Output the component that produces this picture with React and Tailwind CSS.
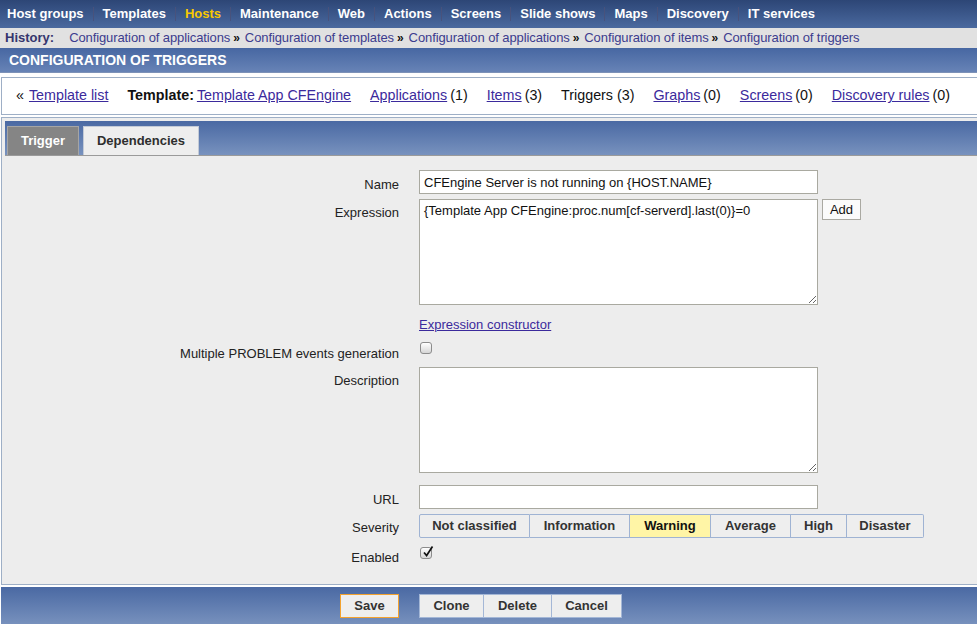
const navItems = [
  "Host groups",
  "Templates",
  "Hosts",
  "Maintenance",
  "Web",
  "Actions",
  "Screens",
  "Slide shows",
  "Maps",
  "Discovery",
  "IT services",
];

const history = [
  "Configuration of applications",
  "Configuration of templates",
  "Configuration of applications",
  "Configuration of items",
  "Configuration of triggers",
];

const severities = [
  { label: "Not classified", w: "w-[111px]" },
  { label: "Information", w: "w-[100px]" },
  { label: "Warning", w: "w-[81px]", active: true },
  { label: "Average", w: "w-[80px]" },
  { label: "High", w: "w-[56px]" },
  { label: "Disaster", w: "w-[77px]" },
];

function Checkbox({ checked }) {
  return (
    <div className="relative w-[12px] h-[12px] rounded-[3px] border border-[#8c8c8c] bg-gradient-to-b from-white to-[#d6d6d6]">
      {checked && (
        <svg className="absolute left-[1px] top-[-3px]" width="12" height="13" viewBox="0 0 12 13">
          <path d="M2 7.5 L4.6 10.5 L10.5 1.5" fill="none" stroke="#111" strokeWidth="1.7" />
        </svg>
      )}
    </div>
  );
}

function Row({ label, pt = "pt-[7px]", className = "", children }) {
  return (
    <div className={"grid grid-cols-[397px_1fr] gap-x-[20px] " + className}>
      <div className={"text-right text-[13px] leading-[16px] text-[#222] " + pt}>{label}</div>
      <div className="flex items-start">{children}</div>
    </div>
  );
}

export default function App() {
  return (
    <div className="w-full h-[624px] overflow-hidden bg-white font-['Liberation_Sans',Arial,sans-serif]">
      {/* top menu */}
      <div className="h-[28px] flex items-center pl-[7px] bg-gradient-to-b from-[#2d4676] to-[#4a699f]">
        {navItems.map((item, i) => (
          <div key={item} className="flex items-center">
            <span className={"text-[13px] font-bold " + (item === "Hosts" ? "text-[#f7c800]" : "text-white")}>
              {item}
            </span>
            {i < navItems.length - 1 && <span className="mx-[9px] w-px h-[14px] bg-[#48527c]" />}
          </div>
        ))}
      </div>

      {/* history */}
      <div className="h-[20px] flex items-center pl-[5px] bg-[#e1e1e1] text-[13px]">
        <span className="font-bold text-[#35356e]">History:</span>
        <div className="ml-[15px] flex items-center tracking-[-0.1px]">
          {history.map((h, i) => (
            <span key={i} className="flex items-center">
              <span className="text-[#3c3c8e]">{h}</span>
              {i < history.length - 1 && <span className="ml-[3px] mr-[5px] text-[12px] font-bold text-[#111]">»</span>}
            </span>
          ))}
        </div>
      </div>

      {/* page header */}
      <div className="h-[25px] flex items-center pl-[9px] bg-gradient-to-b from-[#4767a2] to-[#6783b6] border-b border-[#7d92b8]">
        <span className="text-[14px] font-bold text-white">CONFIGURATION OF TRIGGERS</span>
      </div>

      {/* template navigation */}
      <div className="mt-[4px] ml-[1px] h-[38px] flex items-center pl-[14px] border-l border-y border-[#9eafc6] bg-white text-[14.3px] text-[#111]">
        <span>«</span>
        <a className="ml-[5px] underline text-[#3b2a9c]">Template list</a>
        <span className="ml-[19px] font-bold">Template:</span>
        <a className="ml-[3px] underline text-[#3b2a9c]">Template App CFEngine</a>
        <a className="ml-[19px] underline text-[#3b2a9c]">Applications</a>
        <span className="ml-[3px]">(1)</span>
        <a className="ml-[19px] underline text-[#3b2a9c]">Items</a>
        <span className="ml-[3px]">(3)</span>
        <span className="ml-[19px]">Triggers (3)</span>
        <a className="ml-[19px] underline text-[#3b2a9c]">Graphs</a>
        <span className="ml-[3px]">(0)</span>
        <a className="ml-[19px] underline text-[#3b2a9c]">Screens</a>
        <span className="ml-[3px]">(0)</span>
        <a className="ml-[19px] underline text-[#3b2a9c]">Discovery rules</a>
        <span className="ml-[3px]">(0)</span>
      </div>

      {/* form */}
      <div className="mt-[2px] ml-[1px] border-l border-y border-[#9eafc6] bg-[#ededed] pt-[3px] pb-[18px]">
        <div className="ml-[3px] h-[35px] flex items-end pl-[2px] bg-gradient-to-b from-[#4a69a3] to-[#7892be] border-b border-[#9a9a9a]">
          <div className="w-[72px] h-[29px] flex items-center justify-center bg-[#858585] border-t border-x border-[#a5a5a5] text-[13px] font-bold text-white">
            Trigger
          </div>
          <div className="ml-[4px] w-[116px] h-[29px] flex items-center justify-center bg-[#eeeeee] border-t border-x border-[#c3cad6] text-[13px] font-bold text-[#2e2e2e]">
            Dependencies
          </div>
        </div>

        <Row label="Name" className="mt-[14px]">
          <input
            readOnly
            defaultValue="CFEngine Server is not running on {HOST.NAME}"
            className="w-[399px] h-[24px] px-[4px] bg-white border border-[#a9a9a0] text-[13px] text-[#111] outline-none"
          />
        </Row>

        <Row label="Expression" pt="pt-[6px]" className="mt-[5px]">
          <textarea
            readOnly
            defaultValue="{Template App CFEngine:proc.num[cf-serverd].last(0)}=0"
            className="w-[399px] h-[106px] px-[4px] py-[3px] bg-white border border-[#a9a9a0] text-[13px] leading-[16px] text-[#111] outline-none resize"
          />
          <button className="ml-[4px] w-[39px] h-[21px] bg-[#fbfbfb] border border-[#aaa9a2] text-[13px] text-[#111]">
            Add
          </button>
        </Row>

        <Row label="" pt="pt-0" className="mt-[12px]">
          <a className="text-[13px] leading-[16px] underline text-[#3b2a9c]">Expression constructor</a>
        </Row>

        <Row label="Multiple PROBLEM events generation" pt="pt-[4px]" className="mt-[9px]">
          <div className="pl-[1px]">
            <Checkbox />
          </div>
        </Row>

        <Row label="Description" pt="pt-[6px]" className="mt-[5px]">
          <textarea
            readOnly
            className="w-[399px] h-[106px] px-[4px] py-[3px] bg-white border border-[#a9a9a0] text-[13px] outline-none resize"
          />
        </Row>

        <Row label="URL" className="mt-[12px]">
          <input
            readOnly
            className="w-[399px] h-[24px] px-[4px] bg-white border border-[#a9a9a0] text-[13px] outline-none"
          />
        </Row>

        <Row label="Severity" pt="pt-[6px]" className="mt-[5px]">
          <div className="flex">
            {severities.map((s, i) => (
              <div
                key={s.label}
                className={
                  s.w +
                  " h-[24px] flex items-center justify-center border-y border-r border-[#9fb3d3] text-[13px] font-bold " +
                  (i === 0 ? "border-l rounded-l-[2px] " : "") +
                  (i === severities.length - 1 ? "rounded-r-[2px] " : "") +
                  (s.active ? "bg-[#fff5a6] text-[#111]" : "bg-[#eeeeee] text-[#333]")
                }
              >
                {s.label}
              </div>
            ))}
          </div>
        </Row>

        <Row label="Enabled" pt="pt-[3px]" className="mt-[9px]">
          <div className="pl-[1px]">
            <Checkbox checked />
          </div>
        </Row>
      </div>

      {/* footer buttons */}
      <div className="mt-[2px] ml-[1px] h-[40px] pt-[7px] bg-gradient-to-b from-[#4a69a3] to-[#7b94bf]">
        <div className="grid grid-cols-[398px_1fr] gap-x-[20px]">
          <div className="flex justify-end">
            <button className="w-[59px] h-[24px] bg-[#eeeeee] border border-[#f3a22e] text-[13px] font-bold text-[#333]">
              Save
            </button>
          </div>
          <div className="flex">
            <button className="w-[65px] h-[24px] bg-[#eeeeee] border border-[#a4b7d6] text-[13px] font-bold text-[#333]">
              Clone
            </button>
            <button className="w-[68px] h-[24px] bg-[#eeeeee] border-y border-r border-[#a4b7d6] text-[13px] font-bold text-[#333]">
              Delete
            </button>
            <button className="w-[70px] h-[24px] bg-[#eeeeee] border-y border-r border-[#a4b7d6] text-[13px] font-bold text-[#333]">
              Cancel
            </button>
          </div>
        </div>
      </div>
    </div>
  );
}
